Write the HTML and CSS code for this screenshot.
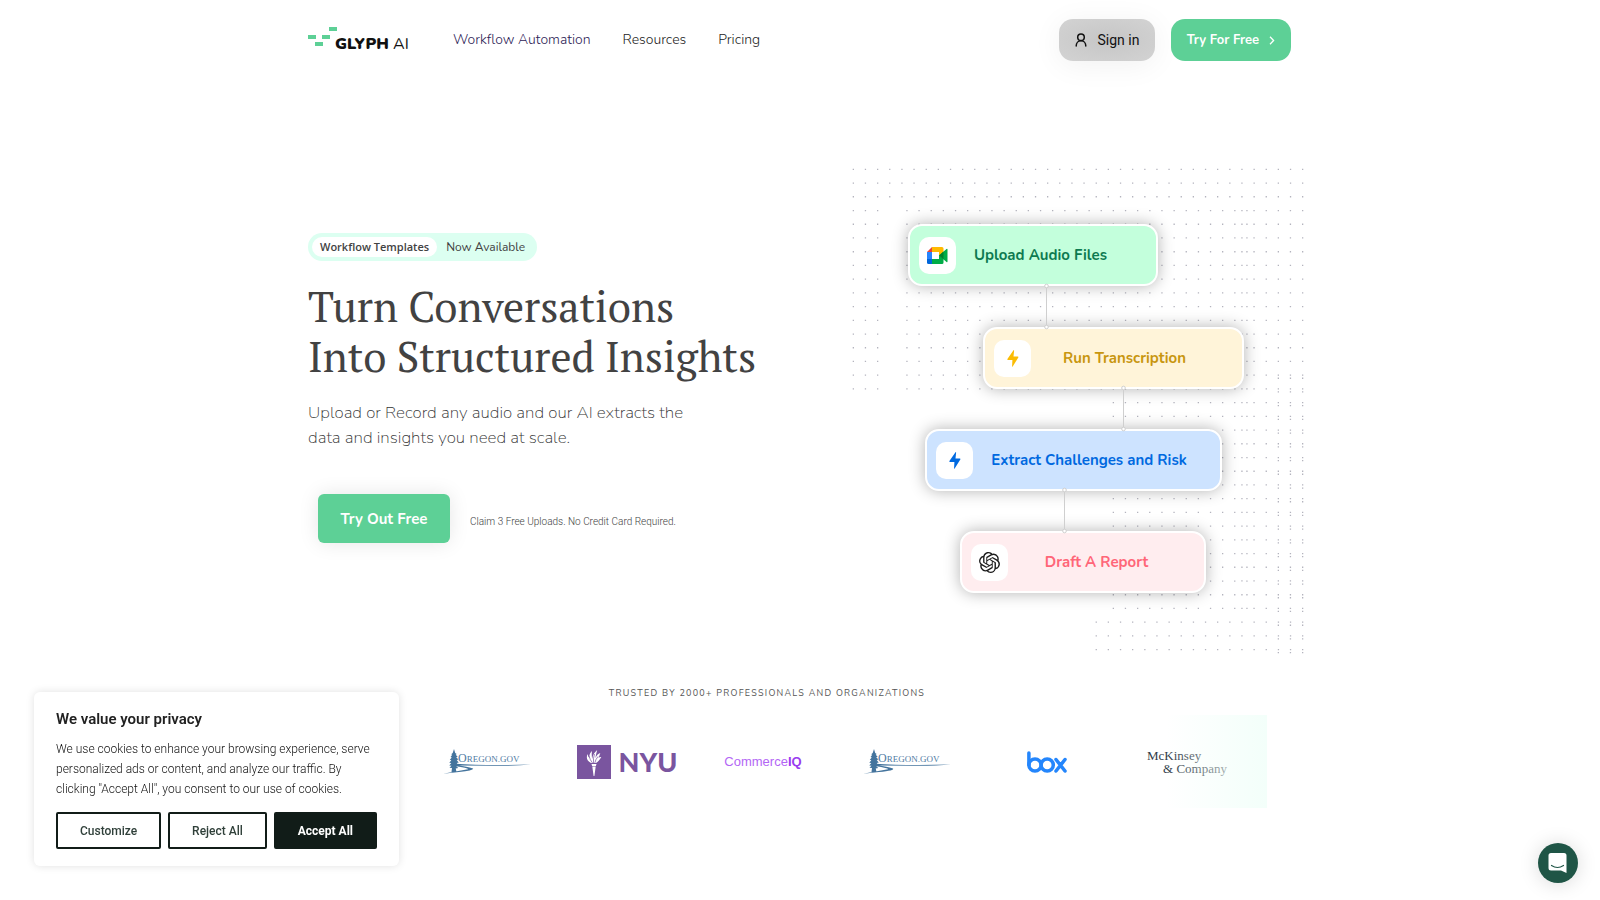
FILE: index.html
```html
<!DOCTYPE html>
<html lang="en">
<head>
    <meta charset="UTF-8">
    <meta name="viewport" content="width=device-width, initial-scale=1.0">
    <title>Glyph AI</title>
    <link rel="stylesheet" href="styles.css">
</head>
<body>
    <header class="container header">
        <a class="logo" href="#">
            <svg class="logo-mark" width="30" height="20" viewBox="0 0 30 20" fill="#5dd096">
                <rect x="21" y="0" width="8" height="4"/>
                <rect x="0" y="8" width="8" height="4"/>
                <rect x="14" y="8" width="8" height="4"/>
                <rect x="7" y="15" width="8" height="4"/>
            </svg>
            <span class="logo-text"><b>GLYPH</b> AI</span>
        </a>
        <nav class="nav">
            <a class="active" href="#">Workflow Automation</a>
            <a href="#">Resources</a>
            <a href="#">Pricing</a>
        </nav>
        <div class="header-buttons">
            <button class="sign-in">
                <svg width="12" height="14" viewBox="0 0 12 14" fill="none" stroke="#111" stroke-width="1.5" stroke-linecap="round">
                    <circle cx="6" cy="4.2" r="3.3"/>
                    <path d="M1.2 13c0-3.2 2.1-5.2 4.8-5.2s4.800 2 4.800 5.200"/>
                </svg>
                Sign in
            </button>
            <button class="try-free">
                Try For Free
                <svg width="6" height="9" viewBox="0 0 6 9" fill="none" stroke="#fff" stroke-width="1.300">
                    <path d="M1 .8l3.600 3.700L1 8.200"/>
                </svg>
            </button>
        </div>
    </header>

    <main>
        <section class="container hero">
            <div class="hero-text">
                <a class="badge" href="#"><b>Workflow Templates</b><span>Now Available</span></a>
                <h1>Turn Conversations<br>Into Structured Insights</h1>
                <p class="lead">Upload or Record any audio and our AI extracts the<br>data and insights you need at scale.</p>
                <div class="cta">
                    <button class="try-out">Try Out Free</button>
                    <span class="note">Claim 3 Free Uploads. No Credit Card Required.</span>
                </div>
            </div>

            <div class="diagram">
                <svg class="dots" id="dots" width="470" height="510" viewBox="0 0 470 510" fill="#b4b4be"></svg>

                <div class="node node-upload">
                    <span class="tile">
                        <svg width="21" height="17" viewBox="0 0 21 17">
                            <path d="M0 5L5 0v5z" fill="#ea4335"/>
                            <path d="M5 0h10a1.500 1.500 0 0 1 1.500 1.500V6L12 8.500V5H5z" fill="#ffba00"/>
                            <path d="M0 5h5v7H0z" fill="#2684fc"/>
                            <path d="M0 12h5v5H1.500A1.500 1.500 0 0 1 0 15.500z" fill="#0066da"/>
                            <path d="M5 12h7V8.500l4.500 3.500v3.500A1.500 1.500 0 0 1 15 17H5z" fill="#00ac47"/>
                            <path d="M12 8.500L19.500 2q1-.6 1 .5v12q0 1.100-1 .5z" fill="#00ac47"/>
                            <path d="M12 8.500L16.500 4.600v7.800z" fill="#00832d"/>
                        </svg>
                    </span>
                    <span class="label">Upload Audio Files</span>
                </div>
                <div class="node node-run">
                    <span class="tile">
                        <svg width="12" height="17" viewBox="0 0 12 17" fill="#fbbc04"><path d="M6.500.3Q7.200-.2 7.100.7L6.500 6.500h4.300q1 .1.500 1L5.700 16.500q-.6.700-.6-.2L5.400 10H1Q0 9.800.4 9z"/></svg>
                    </span>
                    <span class="label">Run Transcription</span>
                </div>
                <div class="node node-extract">
                    <span class="tile">
                        <svg width="12" height="17" viewBox="0 0 12 17" fill="#0069e0"><path d="M6.500.3Q7.200-.2 7.100.7L6.500 6.500h4.300q1 .1.500 1L5.700 16.500q-.6.700-.6-.2L5.400 10H1Q0 9.800.4 9z"/></svg>
                    </span>
                    <span class="label">Extract Challenges and Risk</span>
                </div>
                <div class="node node-draft">
                    <span class="tile">
                        <svg width="21" height="21" viewBox="0 0 24 24" fill="#1c1c1c"><path d="M22.2819 9.8211a5.9847 5.9847 0 0 0-.5157-4.9108 6.0462 6.0462 0 0 0-6.5098-2.9A6.0651 6.0651 0 0 0 4.9807 4.1818a5.9847 5.9847 0 0 0-3.9977 2.9 6.0462 6.0462 0 0 0 .7427 7.0966 5.98 5.98 0 0 0 .511 4.9107 6.051 6.051 0 0 0 6.5146 2.9001A5.9847 5.9847 0 0 0 13.2599 24a6.0557 6.0557 0 0 0 5.7718-4.2058 5.9894 5.9894 0 0 0 3.9977-2.9001 6.0557 6.0557 0 0 0-.7475-7.0729zm-9.022 12.6081a4.4755 4.4755 0 0 1-2.8764-1.0408l.1419-.0804 4.7783-2.7582a.7948.7948 0 0 0 .3927-.6813v-6.7369l2.02 1.1686a.071.071 0 0 1 .038.052v5.5826a4.504 4.504 0 0 1-4.4945 4.4944zm-9.6607-4.1254a4.4708 4.4708 0 0 1-.5346-3.0137l.142.0852 4.783 2.7582a.7712.7712 0 0 0 .7806 0l5.8428-3.3685v2.3324a.0804.0804 0 0 1-.0332.0615L9.74 19.9502a4.4992 4.4992 0 0 1-6.1408-1.6464zM2.3408 7.8956a4.485 4.485 0 0 1 2.3655-1.9728V11.6a.7664.7664 0 0 0 .3879.6765l5.8144 3.3543-2.0201 1.1685a.0757.0757 0 0 1-.071 0l-4.8303-2.7865A4.504 4.504 0 0 1 2.3408 7.872zm16.5963 3.8558L13.1038 8.364 15.1192 7.2a.0757.0757 0 0 1 .071 0l4.8303 2.7913a4.4944 4.4944 0 0 1-.6765 8.1042v-5.6772a.79.79 0 0 0-.407-.667zm2.0107-3.0231l-.142-.0852-4.7735-2.7818a.7759.7759 0 0 0-.7854 0L9.409 9.2297V6.8974a.0662.0662 0 0 1 .0284-.0615l4.8303-2.7866a4.4992 4.4992 0 0 1 6.6802 4.66zM8.3065 12.863l-2.02-1.1638a.0804.0804 0 0 1-.038-.0567V6.0742a4.4992 4.4992 0 0 1 7.3757-3.4537l-.142.0805L8.704 5.459a.7948.7948 0 0 0-.3927.6813zm1.0976-2.3654l2.602-1.4998 2.6069 1.4998v2.9994l-2.5974 1.4997-2.6067-1.4997Z"/></svg>
                    </span>
                    <span class="label">Draft A Report</span>
                </div>

                <svg class="wires" width="470" height="510" viewBox="0 0 470 510" fill="#fff" stroke="#cfcfcf">
                    <path d="M206.500 136v41M283.500 238v41M224.500 340v41"/>
                    <circle cx="206.500" cy="136" r="1.800"/><circle cx="206.500" cy="177" r="1.800"/>
                    <circle cx="283.500" cy="238" r="1.800"/><circle cx="283.500" cy="279" r="1.800"/>
                    <circle cx="224.500" cy="340" r="1.800"/><circle cx="224.500" cy="381" r="1.800"/>
                </svg>
            </div>
        </section>

        <section class="trusted">
            <h2>TRUSTED BY 2000+ PROFESSIONALS AND ORGANIZATIONS</h2>
            <div class="logos">
                <div class="brand">
                    <svg width="88" height="26" viewBox="0 0 88 26">
                        <use href="#oregon"/>
                        <text class="oregon-text" x="15" y="13"><tspan class="oregon-cap">O</tspan>REGON.GOV</text>
                    </svg>
                </div>
                <div class="brand nyu">
                    <svg width="34" height="34" viewBox="0 0 34 34">
                        <path fill="#7a559f" d="M0 0h34v34H0z"/>
                        <path fill="#fff" d="M14.500 19h5l-.6 2h-3.800zM15.300 21.500h3.400L17.400 31h-.8zM14 18c-4-2-5-5-3.500-9 .5 2 1 3 2 4-.5-3 .5-5 2.500-7-.5 3-.2 6 .2 8 .6-4 2-6.500 5-9-.8 3-1.500 5.500-1.700 8 1-2.500 2.500-4.500 4.800-5-.8 2-1 3.500-1.800 5 .8-.8 1.700-1.200 2.800-1-1.300 2.500-3.300 5-5.300 6z"/>
                        <path stroke="#7a559f" stroke-width=".7" fill="none" d="M12 11q1 4 3.500 7M17.500 9q-1.500 4-1 9M21 11.500q-2.500 3-3.200 6.500"/>
                    </svg>
                    NYU
                </div>
                <div class="brand commerce"><span>Commerce<b>IQ</b></span></div>
                <div class="brand">
                    <svg width="88" height="26" viewBox="0 0 88 26">
                        <g id="oregon" fill="#44749d">
                            <path d="M11 0l1.200 4 1.500 1-1 .8 2 2-1.500.5 2.300 2.200-1.800.6 2 2.400-2 .5 2 2.500-2.500.5 2 2-2.500.4.800 3.600h-5L9 19l-2.500-.2 2-2-2.200-.3 2-2.500-2-.3 2-2.400-1.500-.5 2-2.400-1.200-.4 1.600-2.200-1-.6 1.500-1.200z"/>
                            <path d="M12 14.800q30 2 76 .8-16 1.400-38 1.200l-34-.4q10 1.500 14 3 2 2-14 3.600l-16 1.800q18-3.500 25-4.600 1-1-13-3.200z"/>
                        </g>
                        <text class="oregon-text" x="15" y="13"><tspan class="oregon-cap">O</tspan>REGON.GOV</text>
                    </svg>
                </div>
                <div class="brand">
                    <svg width="40" height="22" viewBox="0 0 40 22" fill="none" stroke="#2486fc" stroke-width="3.500" stroke-linecap="round" role="img" aria-label="box">
                        <path d="M1.900 1.900v12"/>
                        <circle cx="8" cy="14" r="6.100"/>
                        <circle cx="20.200" cy="14" r="6.100"/>
                        <path d="M29 8.500l9 11.500M38 8.500L29 20"/>
                    </svg>
                </div>
                <div class="brand mckinsey"><span>McKinsey<br><i>&amp; Company</i></span></div>
            </div>
        </section>
    </main>

    <div class="cookie">
        <h3>We value your privacy</h3>
        <p>We use cookies to enhance your browsing experience, serve personalized ads or content, and analyze our traffic. By clicking "Accept All", you consent to our use of cookies.</p>
        <div class="cookie-buttons">
            <button>Customize</button>
            <button>Reject All</button>
            <button class="accept">Accept All</button>
        </div>
    </div>

    <button class="chat" aria-label="Open chat">
        <svg width="20" height="22" viewBox="0 0 20 22">
            <path fill="#fff" d="M3 1h13a2.500 2.500 0 0 1 2.500 2.500V21L13 18.500H3A2.500 2.500 0 0 1 .5 16V3.500A2.500 2.500 0 0 1 3 1z"/>
            <path fill="none" stroke="#1f5546" stroke-width="1.200" stroke-linecap="round" d="M3.500 13.500q6 4 12 0"/>
        </svg>
    </button>

    <script>
        const dots = document.getElementById('dots');
        const stepX = 12.144;
        const stepY = 13.72;

        // one block of the dotted background
        function addDots(x, y, cols, rows) {
            let d = '';
            for (let r = 0; r < rows; r++) {
                for (let c = 0; c < cols; c++) {
                    d += `M${(x + c * stepX).toFixed(1)} ${(y + r * stepY).toFixed(1)}h1.300v1.300h-1.300z`;
                }
            }
            const path = document.createElementNS('http://www.w3.org/2000/svg', 'path');
            path.setAttribute('d', d);
            dots.appendChild(path);
        }

        addDots(12.7, 18.7, 38, 3);
        addDots(12.7, 59.9, 3, 14);
        addDots(66.3, 59.9, 29, 14);
        addDots(272.7, 252, 12, 16);
        addDots(401.3, 59.9, 3, 30);
        addDots(437.7, 59.9, 3, 30);
        addDots(437.7, 227.6, 3, 21);
        addDots(255.6, 471.5, 18, 3);
    </script>
</body>
</html>
```
FILE: styles.css
```css
* {
    box-sizing: border-box;
}
body {
    font-family: Nunito, Lato, sans-serif;
    background-color: white;
    color: #424242;
    margin: 0;
}
a {
    color: inherit;
    text-decoration: none;
}
button {
    font-family: inherit;
    border: none;
    padding: 0;
    cursor: pointer;
}
.container {
    max-width: 984px;
    margin: 0 auto;
}
.header {
    display: flex;
    align-items: center;
    height: 80px;
}
.logo {
    display: flex;
    width: 145px;
    height: 26px;
}
.logo-mark {
    margin-right: -3px;
}
.logo-text {
    font-size: 16px;
    line-height: 20px;
    padding-top: 7px;
    color: #111;
}
.logo-text b {
    font-weight: 900;
}
.nav {
    display: flex;
    gap: 32px;
    font-size: 14px;
    line-height: 20px;
    font-weight: 300;
    color: #222;
}
.nav .active {
    color: #2d2255;
}
.header-buttons {
    display: flex;
    gap: 16px;
    margin: 0 1px 0 auto;
}
.header-buttons button {
    display: flex;
    align-items: center;
    justify-content: center;
    height: 42px;
    border-radius: 14px;
}
.sign-in {
    gap: 11px;
    width: 96px;
    font-family: Roboto, sans-serif;
    font-size: 14px;
    color: #111;
    background: radial-gradient(#c6c6c6, #d3d3d3);
    box-shadow: 0 4px 30px rgba(0, 0, 0, 0.06);
}
.try-free {
    gap: 10px;
    width: 120px;
    font-size: 13px;
    font-weight: bold;
    color: white;
    background-color: #5dd096;
}
.hero {
    display: flex;
    padding-top: 70px;
}
.hero-text {
    flex: 1;
    padding-top: 83px;
}
.badge {
    display: inline-flex;
    align-items: center;
    height: 28px;
    padding: 0 12px 0 4px;
    border-radius: 14px;
    background-color: #dcfff1;
    font-size: 12px;
}
.badge b {
    font-family: "Open Sans", sans-serif;
    font-size: 11px;
    font-weight: 600;
    line-height: 20px;
    padding: 0 8px;
    margin-right: 9px;
    border-radius: 10px;
    background-color: white;
}
h1 {
    margin: 20px 0 0;
    font-family: "PT Serif", "Liberation Serif", serif;
    font-size: 42px;
    line-height: 50px;
    font-weight: normal;
    white-space: nowrap;
}
.lead {
    margin: 19px 0 0;
    font-size: 17px;
    line-height: 25px;
    font-weight: 200;
    color: #333;
}
.cta {
    display: flex;
    align-items: center;
    gap: 20px;
    margin: 44px 0 0 10px;
}
.try-out {
    width: 132px;
    height: 49px;
    border-radius: 6px;
    font-size: 15px;
    font-weight: bold;
    color: white;
    background-color: #5dd096;
    box-shadow: 0 0 20px rgba(0, 0, 0, 0.1);
}
.note {
    padding-top: 6px;
    font-family: Roboto, sans-serif;
    font-size: 10px;
    font-weight: 300;
}

/* workflow picture */
.diagram {
    position: relative;
    flex: none;
    width: 470px;
    height: 510px;
    margin-right: -18px;
}
.dots, .wires {
    position: absolute;
    top: 0;
    left: 0;
}
.node {
    position: absolute;
    display: flex;
    align-items: center;
    height: 62px;
    padding: 0 9px;
    border: 2px solid white;
    border-radius: 14px;
    box-shadow: 0 0 16px rgba(0, 0, 0, 0.3);
    font-size: 15px;
    font-weight: bold;
}
.tile {
    display: flex;
    align-items: center;
    justify-content: center;
    width: 37px;
    height: 37px;
    border-radius: 10px;
    background-color: white;
}
.label {
    flex: 1;
    text-align: center;
    white-space: nowrap;
}
.node-upload {
    left: 68px;
    top: 74px;
    width: 250px;
    padding-right: 31px;
    color: #0d7a50;
    background-color: #c3ffdc;
}
.node-run {
    left: 143px;
    top: 177px;
    width: 261px;
    padding-right: 24px;
    color: #c8960f;
    background-color: #fff4d9;
}
.node-extract {
    left: 85px;
    top: 279px;
    width: 297px;
    padding-right: 15px;
    color: #0069e0;
    background-color: #cde3ff;
}
.node-draft {
    left: 120px;
    top: 381px;
    width: 246px;
    padding-right: 19px;
    color: #ff6678;
    background-color: #ffedef;
}

.trusted {
    width: 1000px;
    max-width: 100%;
    margin: 0 auto;
    padding-top: 25px;
    position: relative;
    right: 33px;
}
.trusted h2 {
    margin: 0;
    font-size: 9px;
    line-height: 16px;
    font-weight: normal;
    letter-spacing: 0.14em;
    text-align: center;
    color: #555;
}
.logos {
    position: relative;
    display: flex;
    justify-content: flex-end;
    height: 93px;
    margin-top: 14px;
    padding-right: 10px;
}
.logos::after {
    content: "";
    position: absolute;
    top: 0;
    right: 0;
    bottom: 0;
    width: 100px;
    background: linear-gradient(to right, rgba(243, 255, 250, 0), #f3fffa);
}
.brand {
    display: flex;
    align-items: center;
    justify-content: center;
    width: 140px;
}
.oregon-text {
    font-family: "Liberation Serif", serif;
    font-size: 9px;
    fill: #4f7ba3;
}
.oregon-cap {
    font-size: 12px;
}
.nyu {
    gap: 8px;
    font-family: Lato, sans-serif;
    font-size: 27px;
    font-weight: 900;
    color: #7a559f;
}
.commerce {
    padding-right: 8px;
    font-family: "Liberation Sans", sans-serif;
    font-size: 13px;
    color: #b366f5;
}
.commerce b {
    color: #9a3cf0;
}
.mckinsey {
    font-family: "Liberation Serif", serif;
    font-size: 13px;
    line-height: 13px;
    color: #303c48;
}
.mckinsey i {
    padding-left: 16px;
    font-style: normal;
}

.cookie {
    position: fixed;
    left: 34px;
    bottom: 34px;
    width: 365px;
    padding: 17px 22px;
    border-radius: 6px;
    background-color: white;
    box-shadow: 0 0 8px rgba(0, 0, 0, 0.12);
    font-family: Roboto, sans-serif;
    color: #212121;
}
.cookie h3 {
    margin: 0 0 10px;
    font-size: 15px;
    line-height: 20px;
    font-weight: 600;
}
.cookie p {
    margin: 0 0 13px;
    font-size: 12px;
    line-height: 20px;
    font-weight: 300;
    color: #111;
}
.cookie-buttons {
    display: flex;
    gap: 7px;
}
.cookie-buttons button {
    flex: 1 1 auto;
    height: 37px;
    border: 2px solid #111c18;
    border-radius: 2px;
    background-color: white;
    color: #30403a;
    font-size: 12px;
    font-weight: 500;
}
.cookie-buttons .accept {
    background-color: #111c18;
    color: white;
    font-weight: bold;
}
.chat {
    position: fixed;
    right: 22px;
    bottom: 17px;
    display: flex;
    align-items: center;
    justify-content: center;
    width: 40px;
    height: 40px;
    border-radius: 50%;
    background-color: #1f5546;
    box-shadow: 0 1px 20px rgba(0, 0, 0, 0.15);
}
```
